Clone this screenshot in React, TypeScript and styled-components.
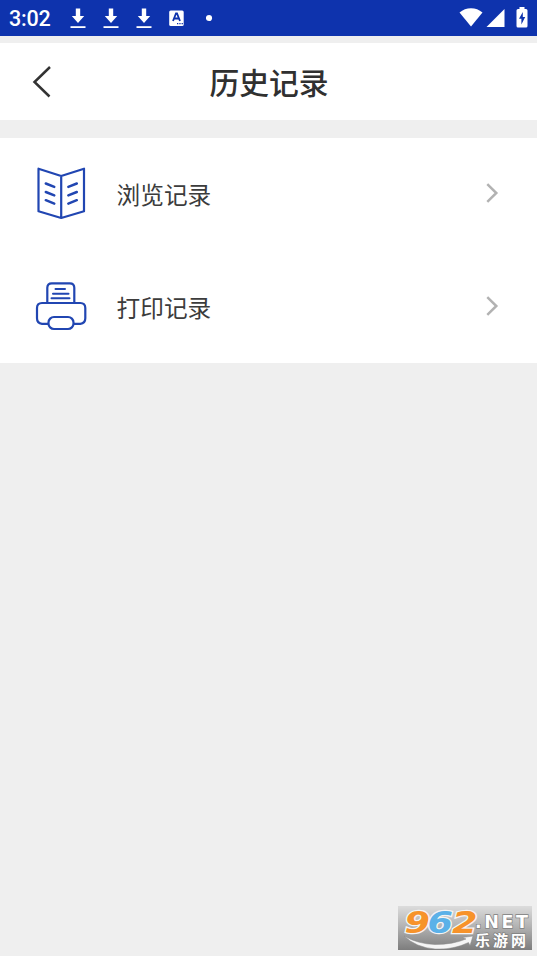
import React from "react";
import styled, { createGlobalStyle } from "styled-components";

const GlobalStyle = createGlobalStyle`
  * { box-sizing: border-box; }
  body {
    margin: 0;
    background: #efefef;
    font-family: Roboto, "Noto Sans CJK SC", sans-serif;
  }
`;

const Screen = styled.div`
  height: 956px;
  display: flex;
  flex-direction: column;
  background: #efefef;
  overflow: hidden;
  position: relative;
`;

const StatusBar = styled.div`
  height: 36px;
  flex: none;
  display: flex;
  align-items: center;
  justify-content: space-between;
  padding: 0 9px;
  background: #0e33ad;
  color: #fff;
`;

const StatusGroup = styled.div`
  display: flex;
  align-items: center;
  height: 36px;
`;

const Clock = styled.span`
  width: 61px;
  font-size: 21.5px;
  line-height: 36px;
  font-weight: 500;
  letter-spacing: -0.2px;
  padding-top: 1px;
`;

const Glyph = styled.svg<{ $gap?: number }>`
  display: block;
  flex: none;
  margin-right: ${(p) => p.$gap ?? 0}px;
`;

const Header = styled.header`
  height: 77px;
  margin: 7.4px 0 18px;
  flex: none;
  display: grid;
  grid-template-columns: 100px 1fr 100px;
  align-items: center;
  background: #fff;
`;

const BackButton = styled.button`
  width: 40px;
  height: 40px;
  margin-left: 22px;
  padding: 0;
  border: 0;
  background: none;
  color: #333;
`;

const Title = styled.h1`
  margin: 0;
  padding: 0 0 2px 1px;
  text-align: center;
  font: 500 29.8px/40px "Noto Sans CJK SC", sans-serif;
  color: #303030;
`;

const List = styled.main`
  flex: none;
  background: #fff;
`;

const Row = styled.div`
  height: 112.5px;
  display: flex;
  align-items: center;
  padding: 0 36px 3px 31px;
`;

const IconBox = styled.span`
  width: 60px;
  height: 60px;
  flex: none;
`;

const Label = styled.span`
  flex: 1;
  margin-left: 25.5px;
  padding-top: 2px;
  font: 400 23.7px/36px "Noto Sans CJK SC", sans-serif;
  color: #3c3c3c;
`;

const Watermark = styled.div`
  position: absolute;
  right: 5px;
  bottom: 6px;
  width: 134px;
  height: 44px;
  background: linear-gradient(#dcdcdc, #b4b4b4 45%, #7d7d7d);
`;

const Download = ({ gap }: { gap: number }) => (
  <Glyph $gap={gap} width="16" height="22" viewBox="0 0 16 22" fill="#fff">
    <path d="M5.800 1.500h4.400V9h4L8 16 1.800 9h4z" />
    <path d="M.5 19.200h15v1.800H.5z" />
  </Glyph>
);

const Chevron = () => (
  <Glyph width="16" height="24" viewBox="0 0 16 24" fill="none" stroke="#b2b2b2" strokeWidth="2.500">
    <path d="M2.300 3.200 11.300 12l-9 8.800" />
  </Glyph>
);

const BookIcon = () => (
  <Glyph width="60" height="60" viewBox="0 0 60 60" fill="none" stroke="#2146b2" strokeWidth="2.200" strokeLinecap="round" strokeLinejoin="round">
    <path d="M7.500 5.700 30.200 13 53 5.700v42.600L30.200 55 7.500 48.300zM30.200 13v42" />
    <path d="m14.800 20.500 8.500 3.400M14.800 29l8.500 3.400M14.800 37.200l8.500 3.400M45.800 20.500l-8.500 3.400M45.800 29l-8.500 3.400M45.800 37.200l-8.500 3.400" strokeWidth="2.500" />
  </Glyph>
);

const PrinterIcon = () => (
  <Glyph width="60" height="60" viewBox="0 0 60 60" fill="none" stroke="#2146b2" strokeWidth="2.200" strokeLinecap="round" strokeLinejoin="round">
    <path d="M16.300 26.500V11.800q0-4.500 4.500-4.500h18q4.500 0 4.500 4.500v14.700" />
    <path d="M24.500 13h9.500M22 17.800h15.500M20.500 22.200h18" strokeWidth="2" />
    <path d="M17 47.800h-6q-5-.5-5-5.500V32q0-5 5-5h38.300q5 0 5 5v10.300q0 5-5 5.500H43" />
    <rect x="17.500" y="41" width="25" height="12" rx="5.500" />
  </Glyph>
);

export default function App() {
  return (
    <>
      <GlobalStyle />
      <Screen>
        <StatusBar>
          <StatusGroup>
            <Clock>3:02</Clock>
            <Download gap={17} />
            <Download gap={17} />
            <Download gap={17} />
            <Glyph $gap={21} width="16" height="18" viewBox="0 0 16 18">
              <rect x=".2" y="1.500" width="14.500" height="15.500" rx="1.500" fill="#fff" />
              <path d="m4 12 3-7.500h1L11 12M5.200 9.500h4.600" fill="none" stroke="#0e33ad" strokeWidth="1.800" />
              <path d="M8 14h1.300v1.300H8zm2.300 0h1.300v1.300h-1.300zm2.300 0h1.300v1.300h-1.300z" fill="#0e33ad" />
            </Glyph>
            <Glyph width="8" height="8" viewBox="0 0 8 8" fill="#fff">
              <circle cx="3" cy="4" r="3.100" />
            </Glyph>
          </StatusGroup>
          <StatusGroup>
            <Glyph $gap={3} width="24" height="20" viewBox="0 0 24 20" fill="#fff">
              <path d="M12 18.500 .5 4.500Q5.500.2 12 .2t11.500 4.300z" />
            </Glyph>
            <Glyph $gap={11} width="19" height="20" viewBox="0 0 19 20" fill="#fff">
              <path d="M18.500 1v18H.5z" />
            </Glyph>
            <Glyph width="12" height="22" viewBox="0 0 12 22">
              <path d="M3.500 0h5v2H10q1.500 0 1.500 1.500V19Q11.500 20.500 10 20.500H2Q.5 20.500 .5 19V3.500Q.5 2 2 2h1.500z" fill="#fff" />
              <path d="M6.800 5 3 11.800h2.400v5.700l3.800-7.500H6.800z" fill="#0e33ad" />
            </Glyph>
          </StatusGroup>
        </StatusBar>
        <Header>
          <BackButton aria-label="返回">
            <Glyph width="40" height="40" viewBox="0 0 40 40" fill="none" stroke="currentColor" strokeWidth="2.500">
              <path d="M28 5 12.500 20 27.500 34.500" />
            </Glyph>
          </BackButton>
          <Title>历史记录</Title>
        </Header>
        <List>
          <Row>
            <IconBox><BookIcon /></IconBox>
            <Label>浏览记录</Label>
            <Chevron />
          </Row>
          <Row>
            <IconBox><PrinterIcon /></IconBox>
            <Label>打印记录</Label>
            <Chevron />
          </Row>
        </List>
        <Watermark>
          <Glyph width="134" height="44" viewBox="0 0 134 44">
            <path d="M6 30q14 8 31 8.500 18 0 31-5.500l-3.500-1.500L75 30l-3 9.500-1.500-3Q55 44 37 43 18 41.500 6 30z" fill="#f5f5f5" stroke="#888" strokeWidth=".5" />
            <g fontFamily="DejaVu Sans" fontSize="31" fontWeight="700" fontStyle="italic" stroke="#f4f4f4" strokeWidth="2.500" paintOrder="stroke">
              <text x="6.500" y="27" textLength="25.500" lengthAdjust="spacingAndGlyphs" fill="#f7932a">9</text>
              <text x="29.500" y="27" textLength="25.500" lengthAdjust="spacingAndGlyphs" fill="#5bb1e8">6</text>
              <text x="54" y="27" textLength="25.500" lengthAdjust="spacingAndGlyphs" fill="#f7932a">2</text>
            </g>
            <g fill="#fff" stroke="#808080" strokeWidth="1.400" paintOrder="stroke">
              <text x="77" y="21.500" fontFamily="DejaVu Sans" fontSize="17.500" fontWeight="700" textLength="54" letterSpacing="1">.NET</text>
              <text x="77" y="40" fontFamily="Noto Sans CJK SC" fontSize="15" fontWeight="700" textLength="51">乐游网</text>
            </g>
          </Glyph>
        </Watermark>
      </Screen>
    </>
  );
}
